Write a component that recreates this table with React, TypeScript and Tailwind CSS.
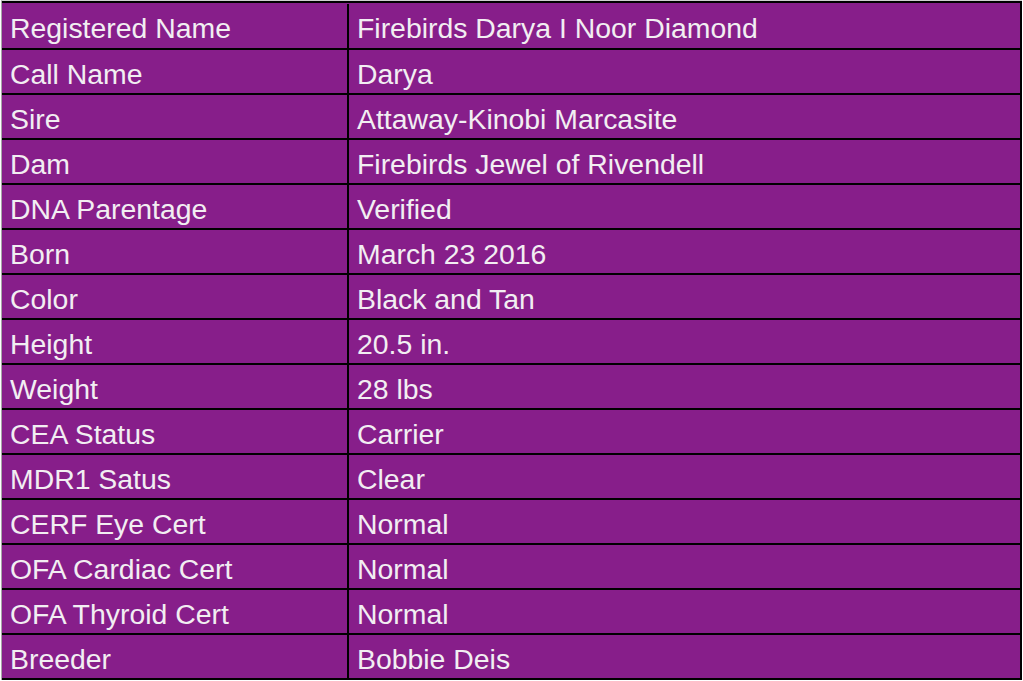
const rows: [string, string][] = [
  ['Registered Name', 'Firebirds Darya I Noor Diamond'],
  ['Call Name', 'Darya'],
  ['Sire', 'Attaway-Kinobi Marcasite'],
  ['Dam', 'Firebirds Jewel of Rivendell'],
  ['DNA Parentage', 'Verified'],
  ['Born', 'March 23 2016'],
  ['Color', 'Black and Tan'],
  ['Height', '20.5 in.'],
  ['Weight', '28 lbs'],
  ['CEA Status', 'Carrier'],
  ['MDR1 Satus', 'Clear'],
  ['CERF Eye Cert', 'Normal'],
  ['OFA Cardiac Cert', 'Normal'],
  ['OFA Thyroid Cert', 'Normal'],
  ['Breeder', 'Bobbie Deis'],
];

export default function App() {
  return (
    <div className="w-[1023px] h-[681px] bg-white overflow-hidden">
      <div
        className="ml-px w-[1021px] border-t border-[#d0d0d0] border-l border-l-[#a8a8a8] text-[28.4px] text-[#f2eef2]"
        style={{ fontFamily: '"Liberation Sans", Arial, sans-serif' }}
      >
        {rows.map(([label, value], i) => (
          <div
            key={label}
            className={`flex border-t-2 border-black bg-[#871e8a] border-r-2 border-r-black ${
              i === 0 ? 'h-[47px] pt-px' : 'h-[45px]'
            }`}
          >
            <div className="w-[347px] shrink-0 border-r-2 border-black pl-2 pt-[8px] leading-[32px] whitespace-nowrap">
              {label}
            </div>
            <div className="flex-1 pl-2 pt-[8px] leading-[32px] whitespace-nowrap">
              {value}
            </div>
          </div>
        ))}
        <div className="h-[2px] bg-black" />
      </div>
    </div>
  );
}
